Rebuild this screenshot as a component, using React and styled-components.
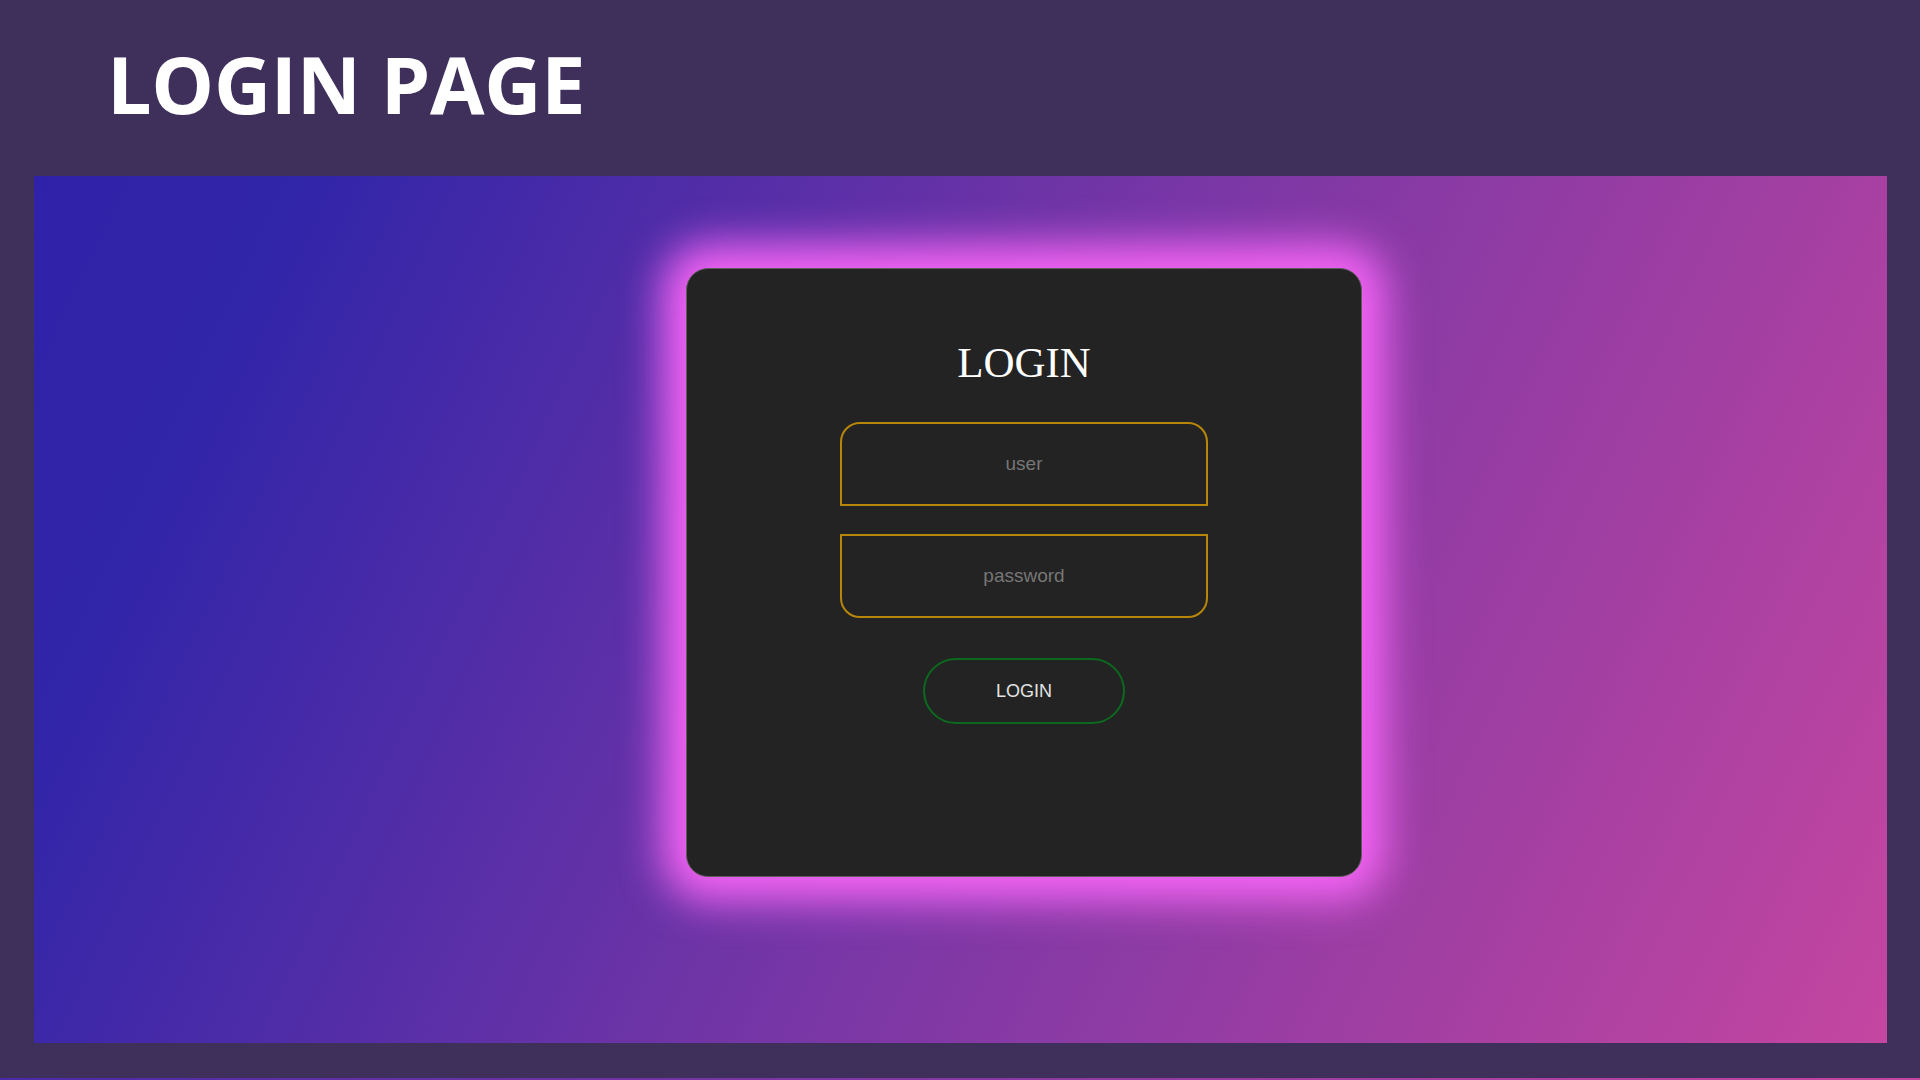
import React from "react";
import styled, { createGlobalStyle } from "styled-components";

const GlobalStyle = createGlobalStyle`
  html, body {
    margin: 0;
    padding: 0;
    background: #3e2f5b;
  }
  * {
    box-sizing: border-box;
  }
`;

const Page = styled.div`
  width: 1920px;
  height: 1080px;
  display: flex;
  flex-direction: column;
  background: #3e2f5b;
  overflow: hidden;
`;

const Title = styled.h1`
  margin: 0;
  padding: 44px 0 0 107px;
  height: 176px;
  font-family: "Open Sans", "Liberation Sans", sans-serif;
  font-weight: 700;
  font-size: 79px;
  line-height: 80px;
  letter-spacing: -0.3px;
  color: #ffffff;
`;

const Slide = styled.section`
  margin: 0 33px 0 34px;
  height: 867px;
  display: flex;
  align-items: flex-start;
  padding: 92px 0 0 652px;
  background: linear-gradient(115deg, #2f22a8 0%, #3125a9 12%, #7636a6 50%, #c446a0 100%);
`;

const Card = styled.div`
  width: 676px;
  height: 609px;
  background: #232323;
  border: 1px solid #5e5a5e;
  border-radius: 22px;
  box-shadow: 0 0 40px 24px #f464f4;
  display: flex;
  flex-direction: column;
  align-items: center;
  padding-top: 71px;
`;

const Heading = styled.h2`
  margin: 0;
  font-family: "Liberation Serif", "Times New Roman", serif;
  font-weight: 400;
  font-size: 43px;
  line-height: 45px;
  color: #ffffff;
`;

const Form = styled.form`
  margin-top: 37px;
  display: flex;
  flex-direction: column;
  align-items: center;
`;

const Input = styled.input`
  width: 368px;
  height: 84px;
  margin-bottom: 28px;
  background: transparent;
  border: 2px solid #b8860b;
  border-radius: ${(p) => (p.$top ? "20px 20px 0 0" : "0 0 20px 20px")};
  outline: none;
  text-align: center;
  font-family: "Liberation Sans", Arial, sans-serif;
  font-size: 19px;
  color: #dddddd;

  &::placeholder {
    color: #767676;
  }
`;

const Button = styled.button`
  margin-top: 12px;
  width: 202px;
  height: 66px;
  background: transparent;
  border: 2px solid #0c6a1e;
  border-radius: 33px;
  font-family: "Liberation Sans", Arial, sans-serif;
  font-size: 18px;
  color: #e2e2e2;
  cursor: pointer;
`;

const NextStrip = styled.div`
  margin-top: auto;
  height: 2px;
  background: linear-gradient(90deg, #4a2aa8, #c446a0);
`;

const App = () => {
    return (
        <>
            <GlobalStyle />
            <Page>
                <Title>LOGIN PAGE</Title>
                <Slide>
                    <Card>
                        <Heading>LOGIN</Heading>
                        <Form onSubmit={(e) => e.preventDefault()}>
                            <Input $top type="text" placeholder="user" />
                            <Input type="password" placeholder="password" />
                            <Button type="submit">LOGIN</Button>
                        </Form>
                    </Card>
                </Slide>
                <NextStrip />
            </Page>
        </>
    );
};

export default App;
